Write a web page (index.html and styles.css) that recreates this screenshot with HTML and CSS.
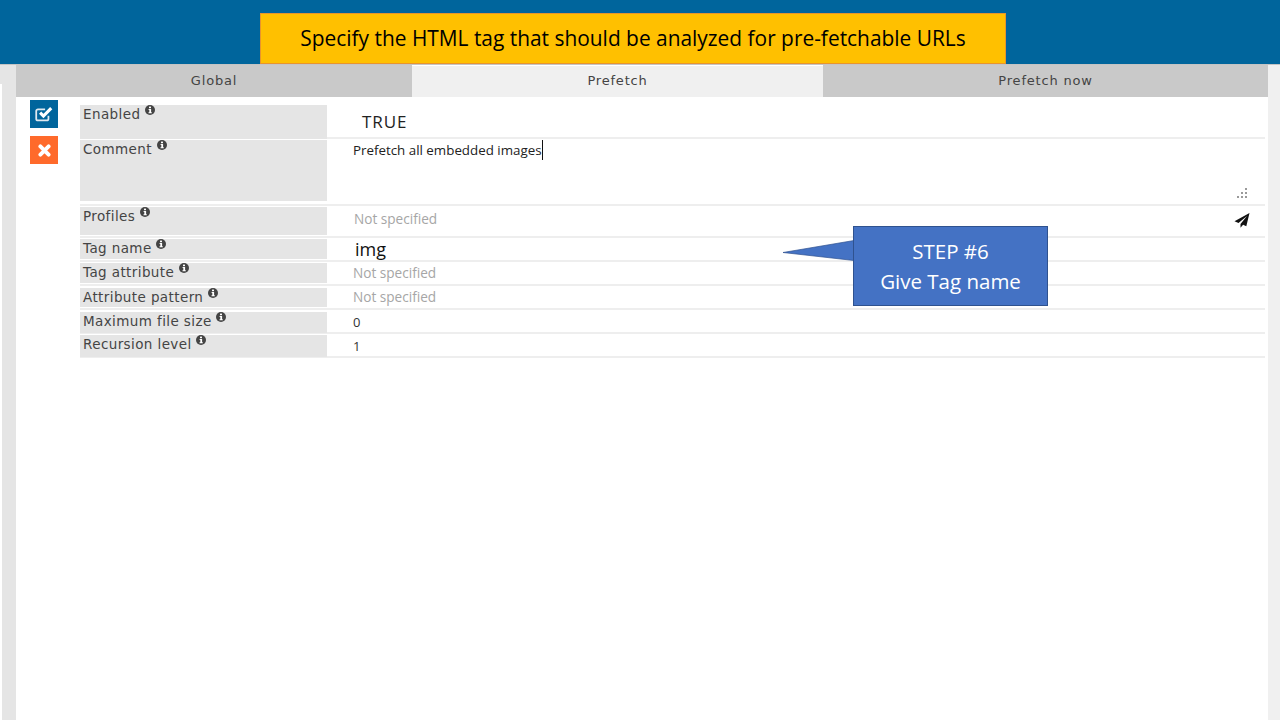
FILE: index.html
```html
<!DOCTYPE html>
<html lang="en">
<head>
    <meta charset="UTF-8">
    <title>Prefetch</title>
    <link rel="stylesheet" href="styles.css">
</head>
<body>
    <svg class="defs" width="0" height="0">
        <symbol id="info" viewBox="0 0 10 10">
            <circle cx="5" cy="5" r="5" fill="#444"/>
            <rect x="4" y="1.600" width="2" height="1.600" fill="#fff"/>
            <path d="M3.600 4h2.500v3.200h.7v1H3.500v-1h.8V5h-.7z" fill="#fff"/>
        </symbol>
    </svg>

    <!-- Top bar -->
    <header class="topbar"></header>
    <div class="banner">Specify the HTML tag that should be analyzed for pre-fetchable URLs</div>

    <div class="page">
        <div class="side-left">
            <div class="side-left-top"></div>
            <div class="side-left-rest"></div>
        </div>
        <main class="main">
            <nav class="tabs">
                <div class="tab tab-global">Global</div>
                <div class="tab tab-prefetch active">Prefetch</div>
                <div class="tab tab-now">Prefetch now</div>
            </nav>

            <div class="content">
                <div class="actions">
                    <button class="action action-save" aria-label="Save">
                        <svg width="20" height="18" viewBox="0 0 18 16" fill="none" stroke="#fff">
                            <path d="M13 9.500v2.700a1.600 1.600 0 0 1-1.600 1.600H3.600A1.600 1.600 0 0 1 2 12.200V5.400a1.600 1.600 0 0 1 1.600-1.600H10" stroke-width="1.600" stroke="#dfe9f0"/>
                            <path d="M5.500 6.800l3 3L15.500 2.800" stroke-width="2.800"/>
                        </svg>
                    </button>
                    <button class="action action-cancel" aria-label="Cancel">
                        <svg width="13" height="13" viewBox="0 0 12 12" fill="none" stroke="#fff" stroke-width="3.600" stroke-linecap="round">
                            <path d="M2.200 2.200l7.600 7.600M9.800 2.200L2.200 9.800"/>
                        </svg>
                    </button>
                </div>

                <div class="fields">
                    <div class="row row-first">
                        <div class="label">Enabled <svg class="info"><use href="#info"/></svg></div>
                        <div class="value value-true">TRUE</div>
                    </div>
                    <div class="row row-comment">
                        <div class="label">Comment <svg class="info"><use href="#info"/></svg></div>
                        <div class="value value-comment">
                            <span class="comment-text">Prefetch all embedded images</span>
                            <svg class="resize" width="10" height="10" viewBox="0 0 10 10" fill="#9a9a9a">
                                <rect x="8" y="0" width="2" height="2"/>
                                <rect x="4" y="4" width="2" height="2"/>
                                <rect x="8" y="4" width="2" height="2"/>
                                <rect x="0" y="8" width="2" height="2"/>
                                <rect x="4" y="8" width="2" height="2"/>
                                <rect x="8" y="8" width="2" height="2"/>
                            </svg>
                        </div>
                    </div>
                    <div class="row">
                        <div class="label">Profiles <svg class="info"><use href="#info"/></svg></div>
                        <div class="value value-profiles muted">
                            <span>Not specified</span>
                            <svg class="send" width="16" height="15" viewBox="0 0 16 15" fill="#111">
                                <path d="M15.500 0L0.500 8.200l4 1.800L13 3 6.500 11v3.800l2.600-3 3.200 1.500z"/>
                            </svg>
                        </div>
                    </div>
                    <div class="row">
                        <div class="label">Tag name <svg class="info"><use href="#info"/></svg></div>
                        <div class="value value-tag">img</div>
                    </div>
                    <div class="row">
                        <div class="label">Tag attribute <svg class="info"><use href="#info"/></svg></div>
                        <div class="value muted">Not specified</div>
                    </div>
                    <div class="row row-inset">
                        <div class="label">Attribute pattern <svg class="info"><use href="#info"/></svg></div>
                        <div class="value muted">Not specified</div>
                    </div>
                    <div class="row row-inset">
                        <div class="label">Maximum file size <svg class="info"><use href="#info"/></svg></div>
                        <div class="value value-num">0</div>
                    </div>
                    <div class="row">
                        <div class="label">Recursion level <svg class="info"><use href="#info"/></svg></div>
                        <div class="value value-num">1</div>
                    </div>
                </div>
            </div>
        </main>
        <div class="side-right"></div>
    </div>

    <!-- Callout -->
    <div class="callout">
        <svg class="callout-arrow" width="72" height="22" viewBox="0 0 72 22">
            <path d="M72 0.500L1 12.500l71 8" fill="#4472c4"/>
            <path d="M72 0.500L1 12.500l71 8" fill="none" stroke="#2f528f" stroke-width="0.700"/>
        </svg>
        <div class="callout-box">STEP #6<br>Give Tag name</div>
    </div>
</body>
</html>
```

FILE: styles.css
```css
html, body {
    margin: 0;
    height: 720px;
    overflow: hidden;
}
body {
    font-family: "Open Sans", "Noto Sans", sans-serif;
    background: #fff;
    color: #333;
}
.defs {
    position: absolute;
}
.topbar {
    height: 64px;
    background: #00659c;
    border-bottom: 1px solid #c4c4c4;
}
.banner {
    position: absolute;
    left: 260px;
    top: 13px;
    width: 746px;
    height: 51px;
    box-sizing: border-box;
    background: #ffc000;
    border: 1px solid #e8942c;
    color: #000;
    font-size: 20.900px;
    line-height: 48px;
    text-align: center;
}
.page {
    display: flex;
    height: 655px;
}
.side-left {
    width: 16px;
    display: flex;
    flex-direction: column;
}
.side-left-top {
    height: 19px;
    background: #e5e5e5;
}
.side-left-rest {
    flex: 1;
    margin-left: 2px;
    background: #e5e5e5;
}
.side-right {
    width: 12px;
    background: #f0f0f0;
}
.main {
    flex: 1;
    min-width: 0;
}
.tabs {
    display: flex;
    height: 32px;
}
.tab {
    background: #c9c9c9;
    color: #444;
    font-family: "DejaVu Sans", sans-serif;
    font-size: 13px;
    letter-spacing: 0.800px;
    line-height: 32px;
    text-align: center;
    box-sizing: border-box;
}
.tab-global {
    width: 396px;
}
.tab-prefetch {
    width: 411px;
}
.tab-now {
    flex: 1;
}
.tab.active {
    background: #f0f0f0;
    border-top: 1px solid #fff;
    line-height: 30px;
}
.content {
    display: flex;
}
.actions {
    width: 64px;
    padding: 3px 0 0 14px;
    box-sizing: border-box;
    display: flex;
    flex-direction: column;
    gap: 8px;
}
.action {
    width: 28px;
    height: 28px;
    padding: 0;
    border: none;
    display: flex;
    align-items: center;
    justify-content: center;
}
.action-save {
    background: #00659c;
}
.action-cancel {
    background: #ff6a2b;
}
.fields {
    width: 1185px;
    margin-top: 8px;
    display: grid;
    grid-template-rows: 34px 67px 32px 24px 24px 24px 24px 24px;
}
.row {
    display: grid;
    grid-template-columns: 247px 1fr;
    border-bottom: 2px solid #eeeeee;
    padding: 1px 0;
}
.row-first {
    padding-top: 0;
}
.row-comment {
    padding-bottom: 3px;
}
.row-inset {
    padding-top: 2px;
}
.label {
    background: #e5e5e5;
    color: #444;
    font-family: "DejaVu Sans", sans-serif;
    font-size: 13.500px;
    letter-spacing: 0.400px;
    line-height: 18px;
    padding-left: 3px;
}
.info {
    width: 10px;
    height: 10px;
    vertical-align: 4px;
    margin-left: 0;
}
.value {
    padding-left: 26px;
    color: #333;
    font-family: "Open Sans", sans-serif;
    font-size: 13px;
    line-height: 20px;
}
.value-num {
    line-height: 22px;
}
.muted {
    color: #a6a6a6;
    font-size: 13.600px;
}
.row-inset .value {
    margin-top: -1px;
}
.value-true {
    padding-left: 35px;
    color: #222;
    font-size: 17px;
    letter-spacing: 0.900px;
    line-height: 34px;
}
.value-comment {
    display: flex;
    justify-content: space-between;
    align-items: flex-end;
    padding-right: 18px;
    color: #222;
    line-height: 20px;
}
.comment-text {
    align-self: flex-start;
    border-right: 1px solid #111;
    font-size: 13.350px;
}
.resize {
    margin-bottom: 3px;
}
.value-profiles {
    display: flex;
    justify-content: space-between;
    align-items: flex-start;
    padding-left: 27px;
    padding-right: 15px;
    line-height: 24px;
}
.send {
    margin-top: 6px;
}
.value-tag {
    padding-left: 28px;
    color: #111;
    font-size: 18px;
    line-height: 20px;
}
.callout {
    position: absolute;
    left: 782px;
    top: 226px;
    display: flex;
}
.callout-arrow {
    margin-top: 14px;
    margin-right: -1px;
}
.callout-box {
    width: 195px;
    height: 80px;
    box-sizing: border-box;
    background: #4472c4;
    border: 1px solid #2f528f;
    color: #fff;
    font-size: 20.500px;
    line-height: 30px;
    text-align: center;
    padding-top: 9px;
}
```
